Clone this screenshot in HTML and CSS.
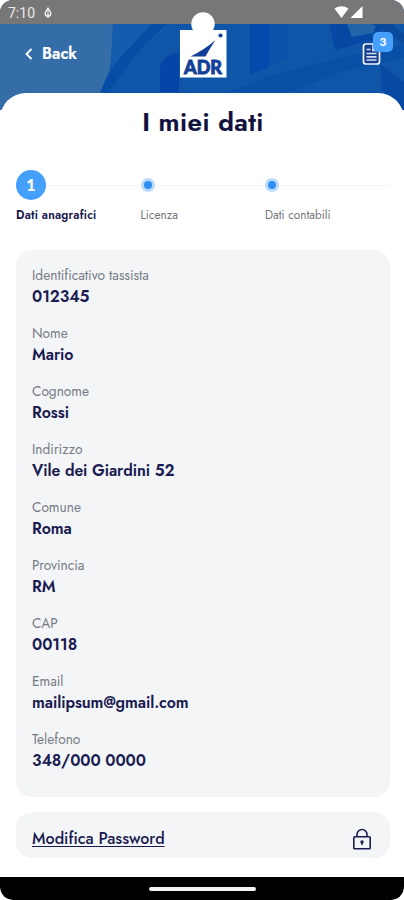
FILE: index.html
```html
<!DOCTYPE html>
<html lang="it">
<head>
<meta charset="utf-8">
<meta name="viewport" content="width=device-width, initial-scale=1">
<title>I miei dati</title>
<link rel="stylesheet" href="styles.css">
</head>
<body>
<div class="phone">
  <header class="top">
    <svg class="pattern" viewBox="0 0 404 110" aria-hidden="true">
      <rect width="404" height="110" fill="#0f56a9"/>
      <path d="M0 24H113Q112 60 109 72L100 92V110H0Z" fill="#346da8"/>
      <path d="M113 24H170L130 58L110 78Z" fill="#155cae"/>
      <path d="M152 24H168Q140 45 109 92H101Q108 68 130 47Z" fill="#084da5"/>
      <path d="M160 92V67Q164 53 179 53V92Z" fill="#0545a7"/>
      <path d="M250 24H269V68L250 74Z" fill="#0549ac"/>
      <path d="M288 24H287V59L250 74L269 67V24Z" fill="#0c51ab"/>
      <path d="M329 24H347L352 36L380 26V38L335 50Z" fill="#0549a4"/>
      <path d="M347 24H377L373 33L352 37Z" fill="#2164a9"/>
      <path d="M229 92L270 76L345 56L404 44V58L340 72L290 92Z" fill="#0a4fa6"/>
      <path d="M372 24H392L404 34V44Z" fill="#0a4a9c"/>
      <path d="M380 64L404 82V110L382 90Z" fill="#084aa3"/>
    </svg>
    <div class="status">
      <span class="time">7:10</span>
      <svg class="dot-icon" viewBox="0 0 8 12"><path d="M4 .5v4M2.200 3.500L4 1 5.800 3.500" fill="none" stroke="#e6e6e6" stroke-width="1.200"/><circle cx="4" cy="6.500" r="2.800" fill="none" stroke="#e6e6e6" stroke-width="1.500"/><path d="M4 6v5" stroke="#e6e6e6" stroke-width="1.800"/></svg>
      <svg class="signal" viewBox="0 0 30 14"><path d="M.5 3.500Q7.500-1 14.500 3.500L7.500 13Z" fill="#fff"/><path d="M28.500 1V13H16.500Z" fill="#fff"/></svg>
    </div>
    <nav class="bar">
      <a class="back"><svg viewBox="0 0 8 12"><path d="M6.500 1L1.500 6l5 5" fill="none" stroke="#fff" stroke-width="1.800"/></svg><span>Back</span></a>
      <div class="docs">
        <svg viewBox="0 0 20 24"><path d="M4 2H12L17.500 7.500V19.500Q17.500 22 15 22H4Q1.500 22 1.500 19.500V4.500Q1.500 2 4 2Z" fill="#173f91" stroke="#f2f5fc" stroke-width="1.700"/><path d="M11 2.500V8.500H17" fill="none" stroke="#e4ebf8" stroke-width="1.600"/><path d="M4.500 7.500h4M4.500 11.500h10M4.500 14.800h10M4.500 18h10" stroke="#d5dff3" stroke-width="1.700"/></svg>
        <span class="badge">3</span>
      </div>
    </nav>
    <svg class="logo" viewBox="0 0 48 70" role="img" aria-label="ADR">
      <circle cx="23" cy="12" r="11.700" fill="#fff"/><rect x="0" y="18" width="46.500" height="47.500" fill="#fff"/>
      <path d="M10.500 44.500Q24 38 35.500 28Q29 38 25.500 44.500Z" fill="#123f98"/><circle cx="40.500" cy="23.500" r="2.100" fill="#123f98"/>
      <text x="4" y="61.500" textLength="38" lengthAdjust="spacingAndGlyphs" class="logo-text">ADR</text>
    </svg>
  </header>
  <main class="sheet">
    <h1>I miei dati</h1>
    <ol class="steps">
      <li class="step active"><span class="mark">1</span><span class="name">Dati anagrafici</span></li>
      <li class="step"><span class="mark"></span><span class="name">Licenza</span></li>
      <li class="step"><span class="mark"></span><span class="name">Dati contabili</span></li>
    </ol>
    <dl class="card">
      <div><dt>Identificativo tassista</dt><dd>012345</dd></div>
      <div><dt>Nome</dt><dd>Mario</dd></div>
      <div><dt>Cognome</dt><dd>Rossi</dd></div>
      <div><dt>Indirizzo</dt><dd>Vile dei Giardini 52</dd></div>
      <div><dt>Comune</dt><dd>Roma</dd></div>
      <div><dt>Provincia</dt><dd>RM</dd></div>
      <div><dt>CAP</dt><dd>00118</dd></div>
      <div><dt>Email</dt><dd>mailipsum@gmail.com</dd></div>
      <div><dt>Telefono</dt><dd>348/000 0000</dd></div>
    </dl>
    <a class="password"><span>Modifica Password</span>
      <svg viewBox="0 0 20 24"><rect x="1.800" y="9.800" width="16.400" height="12" rx=".8" fill="none" stroke="#1a1b50" stroke-width="1.600"/><path d="M5 9.800V7.500a5 5 0 0 1 10 0V9.800" fill="none" stroke="#1a1b50" stroke-width="1.600"/><circle cx="10" cy="15" r="1.700" fill="#1a1b50"/><path d="M10 15v3" stroke="#1a1b50" stroke-width="1.300"/></svg>
    </a>
  </main>
  <footer class="navbar"><span></span></footer>
</div>
</body>
</html>
```
FILE: styles.css
```css
* { box-sizing: border-box; }
body { margin: 0; background: #fff; font-family: Jost, Lato, sans-serif; color: #14154a; }
.phone { width: 404px; height: 900px; border-radius: 13px; overflow: hidden; display: flex; flex-direction: column; background: #fff; }
.top { height: 93px; position: relative; flex: none; }
.pattern { position: absolute; inset: 0; width: 404px; height: 110px; }
.status { position: relative; height: 24px; background: #777; display: flex; align-items: center; padding: 2px 40px 0 8px; }
.time { font: 14px/20px Roboto, sans-serif; color: #e8e8e8; letter-spacing: 0; }
.dot-icon { width: 8px; height: 12px; margin-left: 9px; }
.signal { width: 30px; height: 14px; margin: 0 0 2px auto; }
.bar { position: relative; height: 60px; display: flex; justify-content: space-between; align-items: center; padding: 0 22px 0 25px; }
.back { display: flex; align-items: center; gap: 9px; color: #fff; font-size: 16px; line-height: 22px; padding-bottom: 1px; font-weight: 600; -webkit-text-stroke: .2px #fff; }
.back svg { width: 8px; height: 12px; }
.docs { position: relative; width: 20px; height: 24px; }
.docs > svg { width: 20px; height: 24px; display: block; }
.badge { position: absolute; left: 11px; top: -10px; width: 20px; height: 20px; border-radius: 5px; background: #469ffa; color: #fff; font: 900 12px/20px Lato, sans-serif; text-align: center; }
.logo { position: absolute; left: 180px; top: 12px; width: 48px; height: 70px; }
.logo-text { font: 900 19px Lato, sans-serif; fill: #123f98; stroke: #123f98; stroke-width: .9; }
.sheet { position: relative; flex: 1; background: #fff; border-radius: 26px 26px 0 0; padding: 14px 14px 0 16px; }
h1 { margin: 0; text-align: center; font-size: 26px; line-height: 30px; font-weight: 600; color: #10113c; letter-spacing: .45px; -webkit-text-stroke: .2px #10113c; }
.steps { list-style: none; margin: 33px 0 0; padding: 0; display: grid; grid-template-columns: 124.500px 124.500px 1fr; background: linear-gradient(#f1f3f4, #f1f3f4) 0 15px / 100% 1px no-repeat; height: 79.500px; }
.step { display: flex; flex-direction: column; font-size: 11.800px; color: #73757b; }
.mark { width: 14px; height: 14px; border-radius: 50%; background: #2f8ff5; border: 3.500px solid #b9dcfd; margin: 8px 0; }
.active .mark { width: 30px; height: 30px; margin: 0; background: #45a0fb; border: 0; color: #fff; font: 900 16px/29px Lato, sans-serif; text-align: center; }
.name { line-height: 14px; margin-top: 8px; white-space: nowrap; }
.active .name { font-weight: 600; letter-spacing: .2px; color: #14154a; }
.card { margin: 0; height: 547px; border-radius: 16px; background: #f3f5f6; padding: 15.500px 16px; }
.card div { height: 58.060px; }
dt { font-size: 13.700px; line-height: 20px; color: #777b86; }
dd { margin: 0; font-size: 15.900px; line-height: 24px; font-weight: 600; letter-spacing: -.08px; color: #1a1b50; }
.password { margin-top: 15px; height: 46px; border-radius: 16px; background: #f3f5f6; padding: 8px 18px 0 16px; display: flex; justify-content: space-between; align-items: center; font-size: 16.100px; color: #1a1b50; }
.password span { font-weight: 500; line-height: 20px; padding-top: 1px; text-decoration: underline 1px; text-underline-offset: 1.500px; text-decoration-skip-ink: none; }
.password svg { width: 20px; height: 24px; }
.navbar { height: 23px; background: #000; position: relative; display: flex; justify-content: center; align-items: center; border-radius: 0 0 13px 13px; }
.navbar span { width: 107px; height: 4px; border-radius: 2px; background: #f4f4f4; }
```
